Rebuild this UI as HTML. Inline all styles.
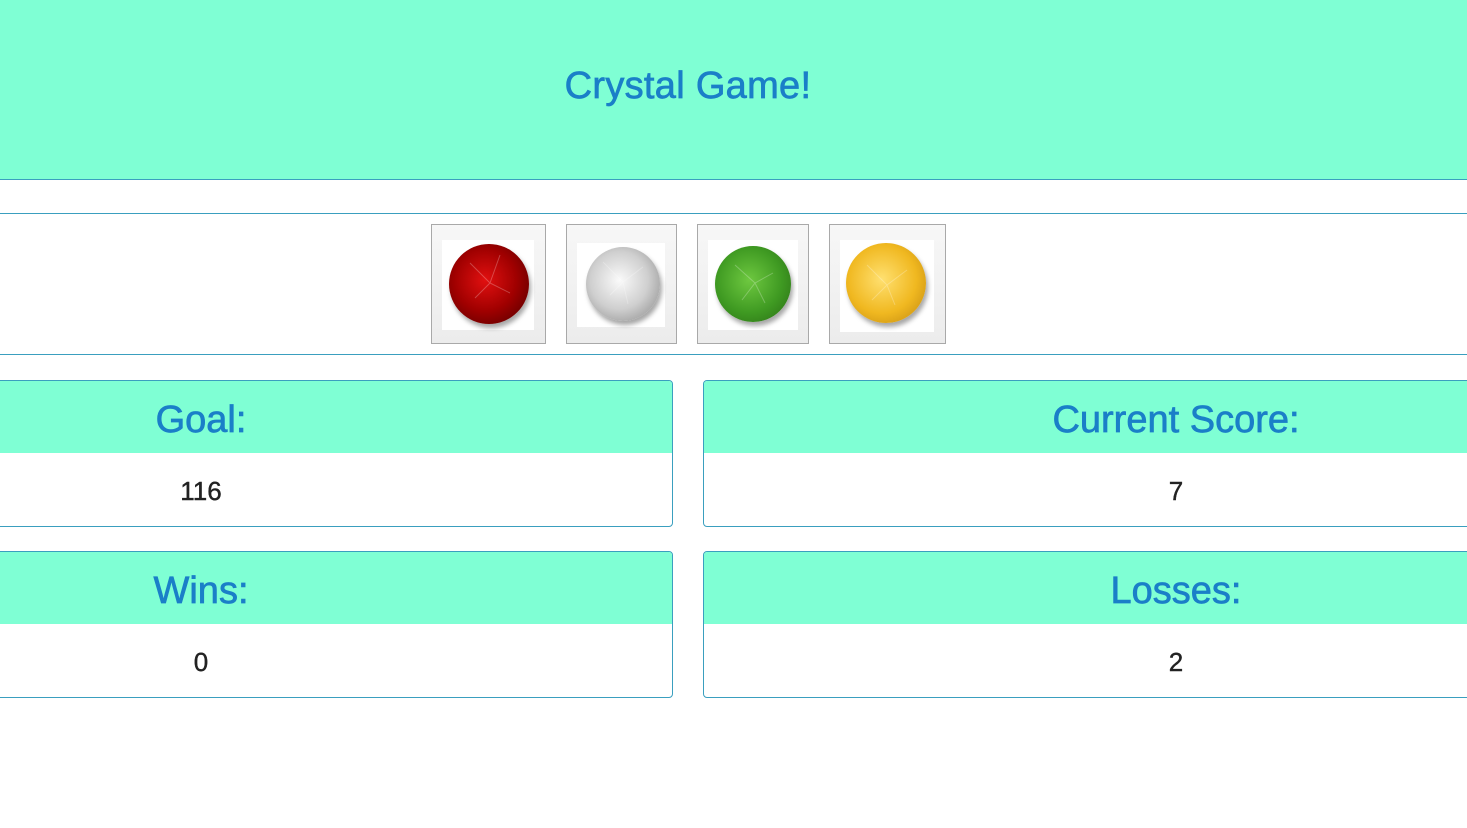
<!DOCTYPE html>
<html><head><meta charset="utf-8"><style>
*{box-sizing:border-box;margin:0;padding:0}
body{width:1467px;height:828px;background:#fff;position:relative;overflow:hidden;font-family:"Liberation Sans",sans-serif}
.a{position:absolute}
.hdr{left:0;top:0;width:1467px;height:180px;background:#7fffd4;border-bottom:1px solid #3a9fbf}
.title{left:0;width:1376px;top:65px;text-align:center;color:#1a7fc8;font-size:38px;letter-spacing:0.3px;-webkit-text-stroke:0.7px #1a7fc8}
.line{left:0;width:1467px;height:1px;background:#3a9fbf}
.box{border:1px solid #a9a9a9;background:linear-gradient(#f7f7f7,#ececec)}
.inner{position:absolute;background:#fff}
.gem{position:absolute;border-radius:50%;box-shadow:2px 4px 5px rgba(0,0,0,.35)}
.card{border:1px solid #3a9fbf;border-radius:4px;overflow:hidden;background:#fff}
.ch{position:absolute;left:0;right:0;top:0;height:72px;background:#7fffd4}
.lbl{position:absolute;color:#1a7fc8;font-size:38px;width:400px;margin-left:-200px;text-align:center;top:18px;-webkit-text-stroke:0.7px #1a7fc8}
.val{position:absolute;color:#222;font-size:26px;width:200px;margin-left:-100px;text-align:center;top:95px;-webkit-text-stroke:0.4px #222}
</style></head><body>
<div class="a hdr"></div>
<div class="a title">Crystal Game!</div>
<div class="a line" style="top:213px"></div>
<div class="a line" style="top:354px"></div>

<div class="a box" style="left:431px;top:224px;width:115px;height:120px"><div class="inner" style="left:10px;top:15px;width:92px;height:90px"></div>
<div class="gem" style="left:17px;top:19px;width:80px;height:80px;background:radial-gradient(circle at 45% 45%,#e11010,#a00000 50%,#5a0000 90%)"></div></div>
<div class="a box" style="left:566px;top:224px;width:111px;height:120px"><div class="inner" style="left:10px;top:18px;width:88px;height:84px"></div>
<div class="gem" style="left:19px;top:22px;width:74px;height:74px;background:radial-gradient(circle at 45% 45%,#fafafa,#cfcfcf 50%,#8a8a8a 95%)"></div></div>
<div class="a box" style="left:697px;top:224px;width:112px;height:120px"><div class="inner" style="left:10px;top:15px;width:90px;height:90px"></div>
<div class="gem" style="left:17px;top:21px;width:76px;height:76px;background:radial-gradient(circle at 45% 45%,#6ec840,#3f9a22 55%,#2a6e15 95%)"></div></div>
<div class="a box" style="left:829px;top:224px;width:117px;height:120px"><div class="inner" style="left:10px;top:15px;width:94px;height:92px"></div>
<div class="gem" style="left:16px;top:18px;width:80px;height:80px;background:radial-gradient(circle at 45% 45%,#ffe070,#f0b820 55%,#c08810 95%)"></div></div>

<div class="a card" style="left:-10px;top:380px;width:683px;height:147px"><div class="ch"></div><div class="lbl" style="left:210px">Goal:</div><div class="val" style="left:210px">116</div></div>
<div class="a card" style="left:703px;top:380px;width:800px;height:147px"><div class="ch"></div><div class="lbl" style="left:472px">Current Score:</div><div class="val" style="left:472px">7</div></div>
<div class="a card" style="left:-10px;top:551px;width:683px;height:147px"><div class="ch"></div><div class="lbl" style="left:210px">Wins:</div><div class="val" style="left:210px">0</div></div>
<div class="a card" style="left:703px;top:551px;width:800px;height:147px"><div class="ch"></div><div class="lbl" style="left:472px">Losses:</div><div class="val" style="left:472px">2</div></div>

<svg class="a" style="left:0;top:0" width="1467" height="828">
<g stroke="rgba(255,255,255,.25)" stroke-width="1" fill="none">
<path d="M470 263l20 20-15 15M500 255l-10 28 20 10"/>
<path d="M603 262l20 20 20-15M610 295l13-13 5 22"/>
<path d="M735 265l20 18 18-10M742 300l13-17 10 20"/>
<path d="M867 265l20 20 20-15M872 300l15-15 8 20"/>
</g></svg>
</body></html>
